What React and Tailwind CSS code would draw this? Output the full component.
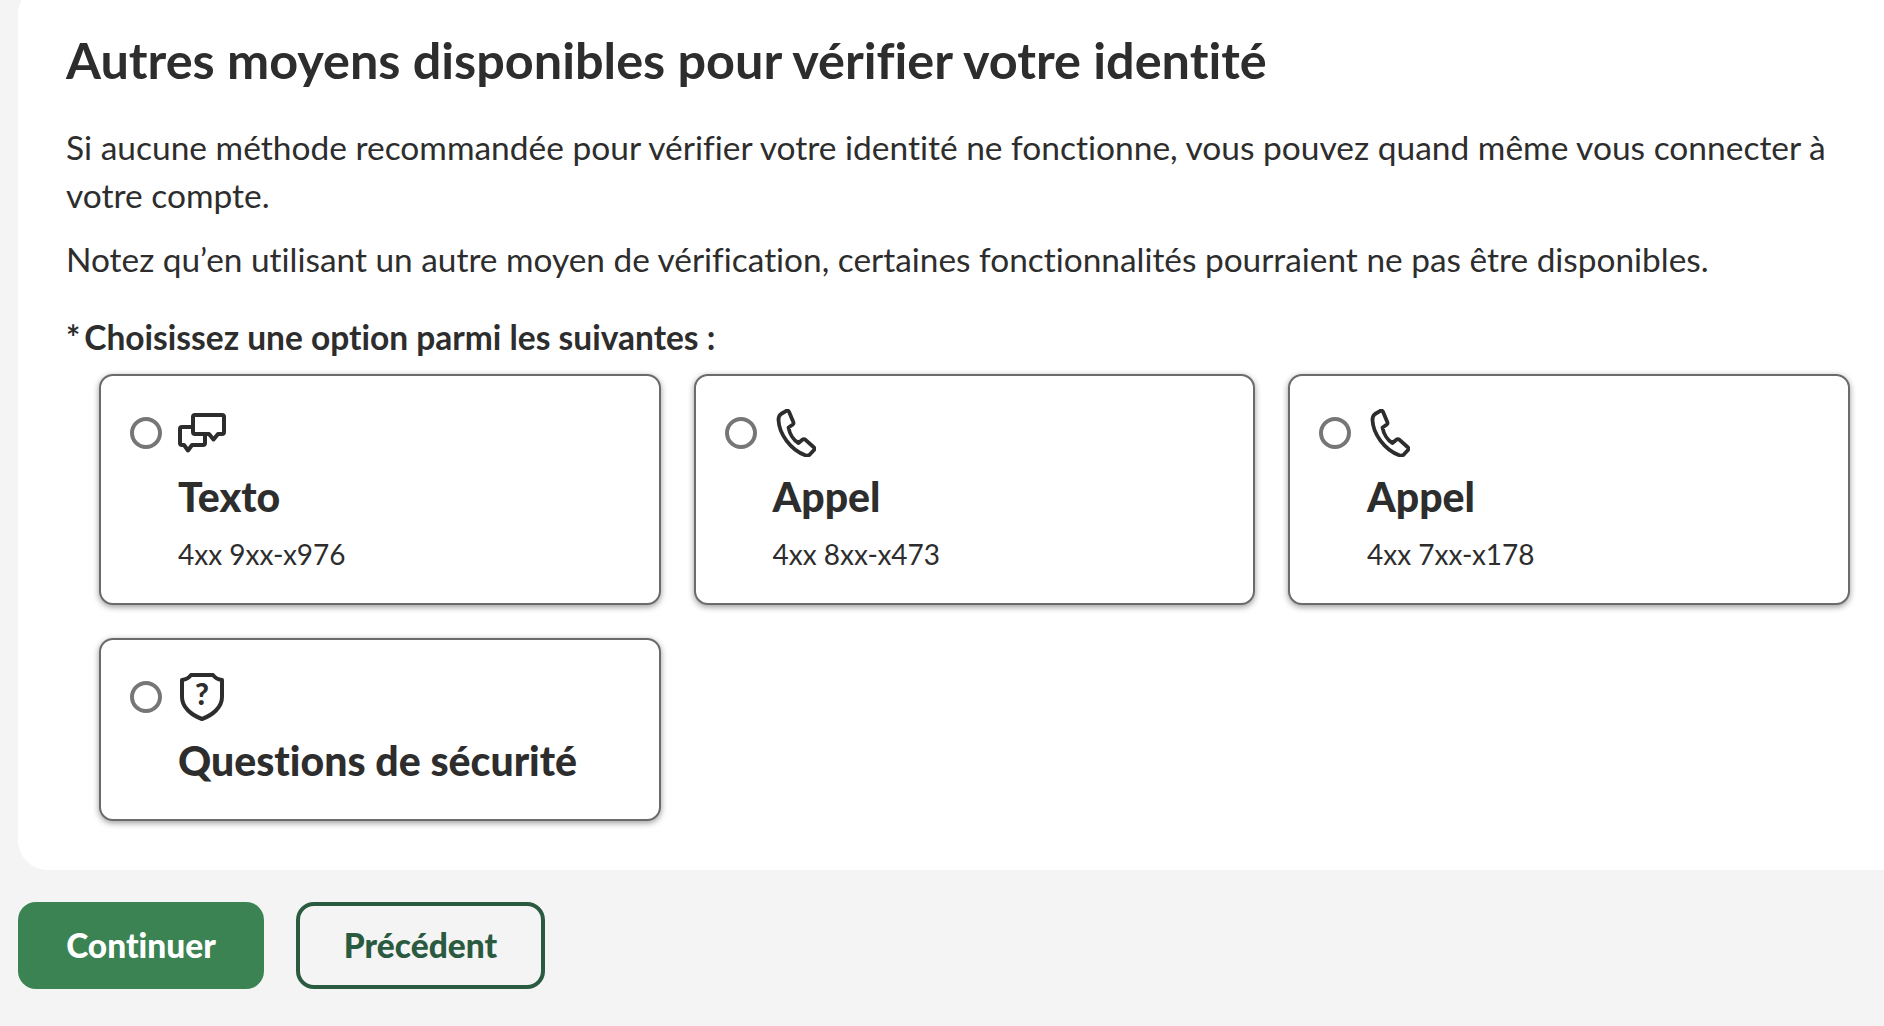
import React from "react";

const font = { fontFamily: "Lato, sans-serif" };

const ChatIcon = () => (
  <svg width="48" height="40" viewBox="0 0 48 40" fill="none" stroke="#2d2d2d" strokeWidth="4" strokeLinejoin="round" strokeLinecap="round">
    <path d="M17 2H44a2 2 0 0 1 2 2V19a2 2 0 0 1-2 2H40L35.500 26.500 31 21H17a2 2 0 0 1-2-2V4a2 2 0 0 1 2-2Z" />
    <path d="M15 14H4a2 2 0 0 0-2 2V30a2 2 0 0 0 2 2H6L10 37.500 14 32H25a2 2 0 0 0 2-2V21" />
  </svg>
);

const PhoneIcon = () => (
  <svg className="ml-[3px]" width="40" height="48" viewBox="0 0 40 48" fill="none" stroke="#2d2d2d" strokeWidth="3.800" strokeLinejoin="round" strokeLinecap="round">
    <path d="M2.500 11C3 24 14 41 30 46.500C31.500 46.800 33 46.300 34 45.300L38 41C38.800 40 38.500 38.800 37.500 38L29.500 30.800C28.500 30 27.300 30 26.300 30.800L22.500 34C17.500 31 13.500 24.500 12.500 18.500L16.500 15.800C17.500 15 17.800 14 17.300 13L13 2.800C12.500 1.700 11.300 1.300 10.300 1.800L5 5C3.300 6.200 2.500 8.500 2.500 11Z" />
  </svg>
);

const ShieldIcon = () => (
  <svg className="ml-[2px]" width="44" height="48" viewBox="0 0 44 48" fill="none">
    <path d="M11 2H33C35 5 38 6.500 42 7V24C42 34 33 42 22 46C11 42 2 34 2 24V7C6 6.500 9 5 11 2Z" stroke="#2d2d2d" strokeWidth="4" strokeLinejoin="round" />
    <text x="22" y="32" textAnchor="middle" fontFamily="Lato, sans-serif" fontWeight="900" fontSize="30" fill="#2d2d2d">?</text>
  </svg>
);

const OptionCard = ({ icon, title, detail }) => (
  <div className="rounded-[14px] border-2 border-[#6b6b6b] bg-white pl-[29px] pt-[33px] pb-[31px] shadow-[0_2px_6px_rgba(0,0,0,0.4)]">
    <div className="flex h-[48px] items-center gap-[16px]">
      <span className="h-[32px] w-[32px] shrink-0 rounded-full border-[4px] border-[#767676] bg-white" />
      {icon}
    </div>
    <div className="pl-[48px]">
      <div className={`mt-[17px] text-[41px] leading-[46px] font-black text-[#2d2d2d] ${detail ? "" : "mb-[4px]"}`}>{title}</div>
      {detail && <div className="mt-[16px] text-[28px] leading-[36px] text-[#2d2d2d]">{detail}</div>}
    </div>
  </div>
);

export default function App() {
  return (
    <div className="h-[1026px] w-full overflow-hidden bg-[#f4f4f4] text-[#2d2d2d] [font-variant-ligatures:none]" style={font}>
      <div className="-mt-[16px] ml-[18px] h-[886px] w-[1900px] rounded-[30px] bg-white pl-[48px] pt-[46px]">
        <h1 className="text-[50.4px] leading-[60px] font-bold">Autres moyens disponibles pour vérifier votre identité</h1>
        <p className="mt-[33px] w-[1790px] text-[33.5px] leading-[48px]">
          Si aucune méthode recommandée pour vérifier votre identité ne fonctionne, vous pouvez quand même vous connecter à votre compte.
        </p>
        <p className="mt-[16px] text-[33.4px] leading-[48px]">
          Notez qu’en utilisant un autre moyen de vérification, certaines fonctionnalités pourraient ne pas être disponibles.
        </p>
        <div className="mt-[34px] flex text-[33.5px] leading-[40px] font-bold">
          <span className="mr-[4px]">*</span>
          <span>Choisissez une option parmi les suivantes :</span>
        </div>
        <div className="mt-[17px] ml-[33px] grid grid-cols-[repeat(3,561.5px)] gap-x-[33px] gap-y-[33px]">
          <OptionCard icon={<ChatIcon />} title="Texto" detail="4xx 9xx-x976" />
          <OptionCard icon={<PhoneIcon />} title="Appel" detail="4xx 8xx-x473" />
          <OptionCard icon={<PhoneIcon />} title="Appel" detail="4xx 7xx-x178" />
          <OptionCard icon={<ShieldIcon />} title="Questions de sécurité" />
        </div>
      </div>
      <div className="mt-[32px] ml-[18px] flex gap-[32px]">
        <button className="h-[87px] w-[246px] rounded-[18px] bg-[#3c8353] text-[33.5px] font-black text-white">Continuer</button>
        <button className="h-[87px] w-[249px] rounded-[18px] border-[4px] border-[#2a5a3f] text-[33.5px] font-black text-[#2a5a3f]">Précédent</button>
      </div>
    </div>
  );
}
